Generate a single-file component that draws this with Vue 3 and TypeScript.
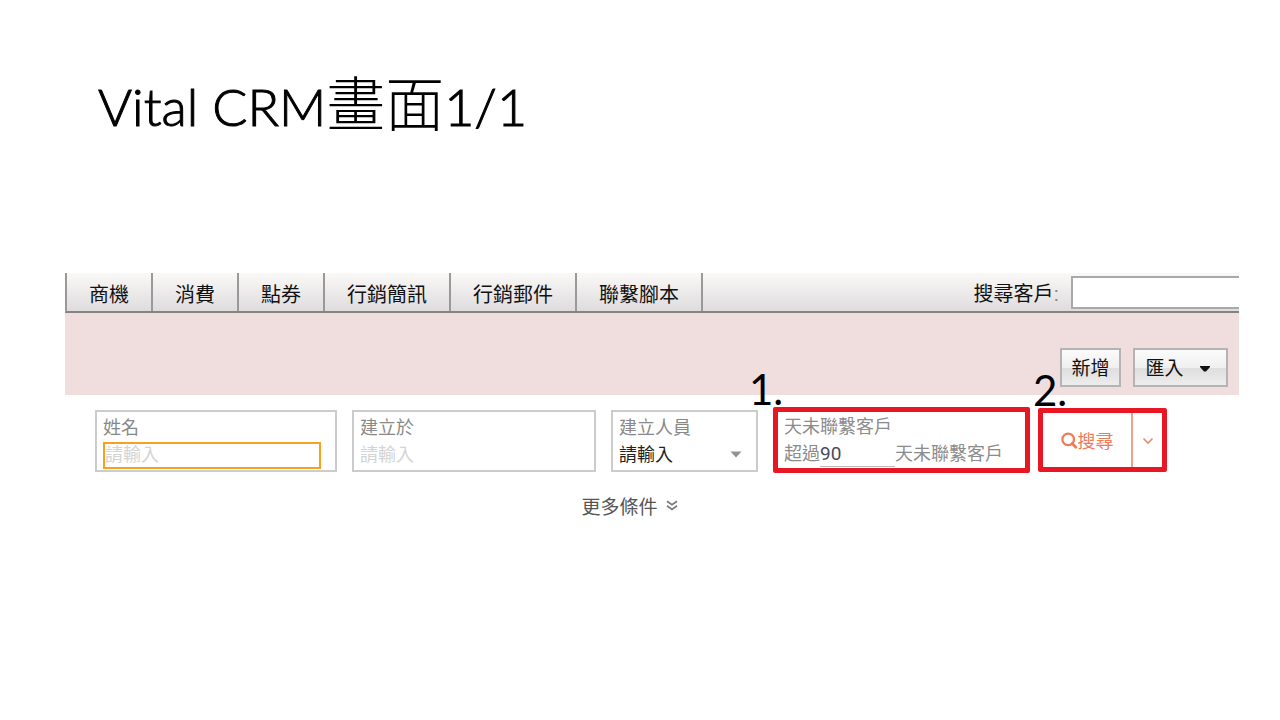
<script setup lang="ts">
import { ref } from 'vue'

const tabs: string[] = ['商機', '消費', '點券', '行銷簡訊', '行銷郵件', '聯繫腳本']
const keyword = ref('')
const name = ref('')
const createdAt = ref('')
const owner = ref('')
const days = ref('90')
</script>

<template>
  <main class="slide">
    <h1 class="title">Vital CRM<span class="han">畫面</span>1/1</h1>
    <section class="crm">
      <header class="bar">
        <nav class="tabs">
          <a v-for="tab in tabs" :key="tab" class="tab" href="#">{{ tab }}</a>
        </nav>
        <label class="lookup-label" for="lookup">搜尋客戶<span class="colon">:</span></label>
        <input id="lookup" v-model="keyword" class="lookup" type="text" />
      </header>
      <div class="actions">
        <button class="action" type="button">新增</button>
        <button class="action wide" type="button">
          匯入
          <svg class="caret" width="10" height="6" viewBox="0 0 10 6"><path d="M0 0H10V1L6 5.5H4L0 1Z" fill="#111" /></svg>
        </button>
      </div>
      <form class="filters" @submit.prevent>
        <div class="field">
          <label class="caption" for="name">姓名</label>
          <input id="name" v-model="name" class="entry active" type="text" placeholder="請輸入" />
        </div>
        <div class="field">
          <label class="caption" for="created">建立於</label>
          <input id="created" v-model="createdAt" class="entry" type="text" placeholder="請輸入" />
        </div>
        <div class="field">
          <label class="caption" for="owner">建立人員</label>
          <div class="select-wrap">
            <select id="owner" v-model="owner" class="select">
              <option value="">請輸入</option>
            </select>
            <svg class="select-caret" width="12" height="7" viewBox="0 0 12 7"><path d="M0.5 0.5H11.5L6 6.5Z" fill="#929292" /></svg>
          </div>
        </div>
        <div class="marked idle">
          <span class="step step-one">1.</span>
          <label class="caption" for="days">天未聯繫客戶</label>
          <div class="sentence">
            <span>超過</span>
            <input id="days" v-model="days" class="days" type="text" />
            <span>天未聯繫客戶</span>
          </div>
        </div>
        <div class="marked search">
          <span class="step step-two">2.</span>
          <button class="search-main" type="submit">
            <svg width="17" height="18" viewBox="0 0 17 18" fill="none" stroke="#ee7b5c">
              <circle cx="7.2" cy="8.4" r="5.8" stroke-width="2.3" />
              <path d="M11.2 12.6L14.8 16.2" stroke-width="2.8" stroke-linecap="round" />
            </svg>
            搜尋
          </button>
          <button class="search-more" type="button" aria-label="搜尋選項">
            <svg width="12" height="8" viewBox="0 0 12 8" fill="none" stroke="#e98a72" stroke-width="1.6"><path d="M1.5 1.5L6 6L10.5 1.5" /></svg>
          </button>
        </div>
      </form>
      <button class="more" type="button">
        更多條件
        <svg width="12" height="12" viewBox="0 0 12 12" fill="none" stroke="#7a7a7a" stroke-width="1.7"><path d="M1 1.2L6 4.8L11 1.2M1 5.8L6 9.4L11 5.8" /></svg>
      </button>
    </section>
  </main>
</template>

<style>
body {
  background: #fff;
}
</style>

<style scoped>
.slide {
  padding: 72px 41px 40px 65px;
  font-family: "Liberation Sans", "Noto Sans CJK TC", sans-serif;
  color: #111;
}
.slide *,
.slide {
  box-sizing: border-box;
}
button,
input,
select {
  font: inherit;
  color: inherit;
  margin: 0;
  padding: 0;
  border: 0;
  background: none;
  min-width: 0;
}
.title {
  margin: 0 0 133px 33px;
  font-family: Lato, "Noto Sans CJK TC", sans-serif;
  font-size: 52px;
  font-weight: 300;
  line-height: 68px;
  color: #000;
  -webkit-text-stroke: 1px #000;
}
.han {
  font-size: 59px;
  line-height: 60px;
  -webkit-text-stroke: 0;
}
.bar {
  display: flex;
  align-items: center;
  height: 40px;
  border-left: 2px solid #999;
  border-bottom: 2px solid #858384;
  background: linear-gradient(#fbf8f8, #dfdcdd);
}
.tabs {
  display: flex;
  align-self: stretch;
}
.tab {
  display: flex;
  align-items: center;
  padding: 2px 22px 0;
  border-right: 2px solid #999;
  font-size: 20px;
  color: #111;
  text-decoration: none;
}
.lookup-label {
  margin-left: auto;
  font-size: 20px;
}
.colon {
  color: #888;
}
.lookup {
  width: 168px;
  height: 33px;
  margin-left: 12px;
  padding: 0 6px;
  border: 2px solid #a9a9a9;
  border-right: 0;
  background: #fff;
}
.actions {
  display: flex;
  justify-content: flex-end;
  gap: 12px;
  padding: 35px 11px 8px;
  background: #f0dede;
}
.action {
  display: flex;
  align-items: center;
  justify-content: center;
  gap: 16px;
  width: 61px;
  height: 39px;
  padding-bottom: 2px;
  border: 2px solid #b5b3b3;
  background: linear-gradient(#fbfbfb 0%, #f0f0f0 50%, #dedede 51%, #ededed 100%);
  font-size: 19px;
}
.action.wide {
  width: 95px;
  padding-right: 6px;
}
.caret {
  margin-top: 4px;
}
.filters {
  display: grid;
  grid-template-columns: 257fr 259fr 162fr 265fr 129fr;
  align-items: start;
  padding: 12px 72px 0 30px;
}
.field {
  height: 62px;
  margin: 3px 15px 0 0;
  padding: 3px 6px;
  border: 2px solid #ccc;
}
.caption {
  display: block;
  height: 27px;
  font-size: 18px;
  line-height: 26px;
  color: #888;
  white-space: nowrap;
}
.entry {
  display: block;
  width: 100%;
  height: 27px;
  font-size: 18px;
}
.entry::placeholder {
  color: #d4d4d4;
  opacity: 1;
}
.entry.active {
  width: calc(100% - 8px);
  border: 2px solid #f5a21f;
  outline: none;
}
.select-wrap {
  position: relative;
}
.select {
  width: 100%;
  height: 26px;
  appearance: none;
  font-size: 18px;
  color: #222;
}
.select-caret {
  position: absolute;
  right: 8px;
  top: 9px;
  pointer-events: none;
}
.marked {
  position: relative;
  border: 5px solid #e81723;
  border-radius: 2px;
}
.idle {
  height: 66px;
  margin-right: 8px;
  padding: 2px 6px;
}
.idle .caption,
.sentence {
  color: #8c8c8c;
}
.sentence {
  display: flex;
  height: 26px;
  font-size: 18px;
  line-height: 26px;
  white-space: nowrap;
}
.days {
  width: 75px;
  height: 26px;
  border-bottom: 1px solid #bbb;
  font-family: Roboto, sans-serif;
  font-size: 19px;
  color: #4a4a5a;
}
.search {
  display: flex;
  height: 64px;
  margin-top: 1px;
  color: #ee7b5c;
}
.search-main {
  display: flex;
  flex: 1;
  align-items: center;
  justify-content: center;
  font-size: 18px;
  border-right: 2px solid #f0a08c;
  white-space: nowrap;
}
.search-more {
  width: 29px;
}
.step {
  position: absolute;
  font-family: Lato, sans-serif;
  font-size: 42px;
  line-height: 42px;
  color: #000;
}
.step-one {
  left: -29px;
  top: -44px;
}
.step-two {
  left: -10px;
  top: -44px;
}
.more {
  display: flex;
  align-items: center;
  gap: 8px;
  margin: 19px auto 0 44%;
  font-size: 19px;
  color: #555;
}
</style>
